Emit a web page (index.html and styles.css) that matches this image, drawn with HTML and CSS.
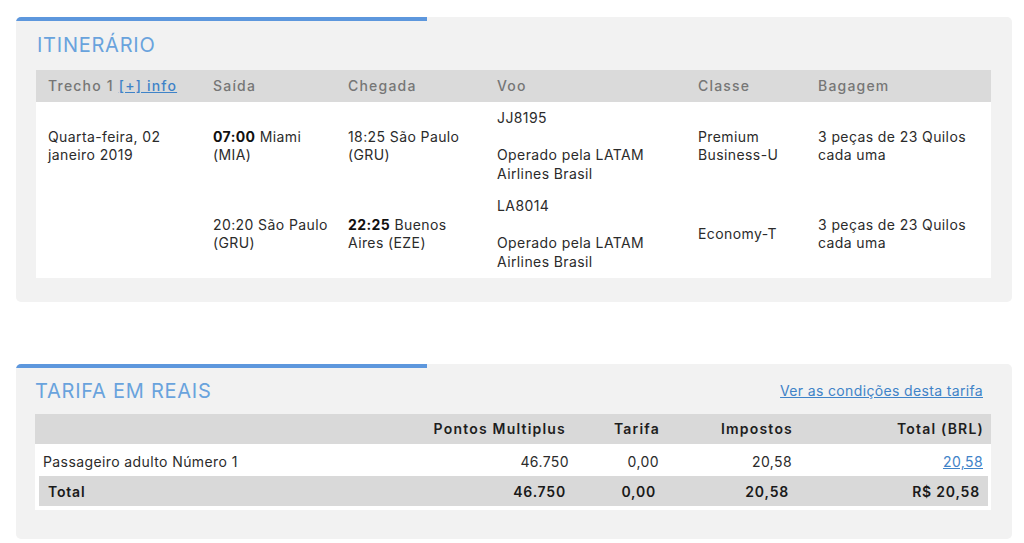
FILE: index.html
```html
<!DOCTYPE html>
<html lang="pt-BR">
<head>
<meta charset="utf-8">
<title>Itinerário</title>
<link rel="stylesheet" href="styles.css">
</head>
<body>
<div class="page">
  <section class="card card-itin">
    <div class="accent"></div>
    <h2 class="card-title">ITINERÁRIO</h2>
    <table class="itin">
      <colgroup>
        <col class="c1"><col class="c2"><col class="c3"><col class="c4"><col class="c5"><col class="c6">
      </colgroup>
      <thead>
        <tr>
          <th>Trecho 1 <a href="#" class="link">[+] info</a></th>
          <th>Saída</th>
          <th>Chegada</th>
          <th>Voo</th>
          <th>Classe</th>
          <th>Bagagem</th>
        </tr>
      </thead>
      <tbody>
        <tr>
          <td>Quarta-feira, 02 janeiro 2019</td>
          <td><b>07:00</b> Miami (MIA)</td>
          <td>18:25 São Paulo (GRU)</td>
          <td>JJ8195<br><br>Operado pela LATAM Airlines Brasil</td>
          <td>Premium Business-U</td>
          <td>3 peças de 23 Quilos cada uma</td>
        </tr>
        <tr>
          <td></td>
          <td>20:20 São Paulo (GRU)</td>
          <td><b>22:25</b> Buenos Aires (EZE)</td>
          <td>LA8014<br><br>Operado pela LATAM Airlines Brasil</td>
          <td>Economy-T</td>
          <td>3 peças de 23 Quilos cada uma</td>
        </tr>
      </tbody>
    </table>
  </section>

  <section class="card card-fare">
    <div class="accent"></div>
    <div class="fare-head">
      <h2 class="card-title">TARIFA EM REAIS</h2>
      <a href="#" class="link fare-link">Ver as condições desta tarifa</a>
    </div>
    <div class="fare">
      <div class="frow fhead">
        <span></span>
        <span class="num pts">Pontos Multiplus</span>
        <span class="num">Tarifa</span>
        <span class="num">Impostos</span>
        <span class="num">Total (BRL)</span>
      </div>
      <div class="fare-body">
        <div class="frow fpax">
          <span class="lbl">Passageiro adulto Número 1</span>
          <span class="num">46.750</span>
          <span class="num">0,00</span>
          <span class="num">20,58</span>
          <span class="num"><a href="#" class="link">20,58</a></span>
        </div>
        <div class="frow ftotal">
          <span class="lbl">Total</span>
          <span class="num">46.750</span>
          <span class="num">0,00</span>
          <span class="num">20,58</span>
          <span class="num">R$ 20,58</span>
        </div>
      </div>
    </div>
  </section>
</div>
</body>
</html>
```
FILE: styles.css
```css
* { box-sizing: border-box; }
html, body { margin: 0; padding: 0; background: #fff; }
body {
  font-family: Inter, "Liberation Sans", sans-serif;
  font-size: 14px;
  line-height: 18.5px;
  color: #2b2b2b;
  letter-spacing: 0.4px;
}
.page {
  padding: 17px 12px 0 16px;
  display: flex;
  flex-direction: column;
  gap: 62px;
}
.card {
  background: #f2f2f2;
  border-radius: 5px;
  overflow: hidden;
}
.accent {
  width: 411px;
  height: 4px;
  background: #5d97dd;
}
.card-title {
  margin: 0;
  font-size: 20px;
  line-height: 24px;
  font-weight: 400;
  color: #69a3dd;
  letter-spacing: 0.75px;
}
.link { color: #3f83c8; text-decoration: underline; }

/* Itinerary */
.card-itin { padding: 0 21px 24px 20px; }
.card-itin .accent { margin-left: -20px; }
.card-itin .card-title { margin: 12px 0 13px 1px; }
.itin {
  width: 955px;
  border-collapse: collapse;
  table-layout: fixed;
  background: #fff;
}
.itin .c1 { width: 165px; }
.itin .c2 { width: 135px; }
.itin .c3 { width: 149px; }
.itin .c4 { width: 201px; }
.itin .c5 { width: 120px; }
.itin .c6 { width: 185px; }
.itin th {
  background: #dadada;
  height: 32px;
  padding: 0 4px 0 12px;
  text-align: left;
  font-weight: 500;
  color: #767676;
  letter-spacing: 1.2px;
  white-space: nowrap;
}
.itin td {
  padding: 7px 4px 7px 12px;
  vertical-align: middle;
}
.itin b { font-weight: 700; color: #111; }

/* Fare */
.card-fare { padding: 0 19px 29px 19px; }
.card-fare .accent { margin-left: -19px; }
.fare-head {
  display: flex;
  justify-content: space-between;
  align-items: center;
  margin: 11px 10px 11px 0;
}
.fare-link { font-size: 14px; letter-spacing: 0.35px; }
.fare { width: 956px; }
.frow {
  display: grid;
  grid-template-columns: 1fr 157px 90px 133px 191px;
  align-items: center;
}
.frow .num { text-align: right; padding-right: 8px; }
.fhead {
  background: #d9d9d9;
  height: 30px;
  font-weight: 600;
  color: #1e1e1e;
  letter-spacing: 1.2px;
}
.fhead .num { padding-right: 7px; }
.fhead .pts { padding-right: 11px; }
.fare-body { background: #fff; padding-bottom: 4px; }
.fpax { height: 32px; padding-top: 4px; }
.fpax .lbl { padding-left: 8px; }
.ftotal {
  margin: 0 3px 0 4px;
  height: 30px;
  padding-top: 3px;
  background: #d9d9d9;
  font-weight: 600;
  color: #1a1a1a;
  letter-spacing: 0.8px;
}
.ftotal .lbl { padding-left: 9px; }
```
